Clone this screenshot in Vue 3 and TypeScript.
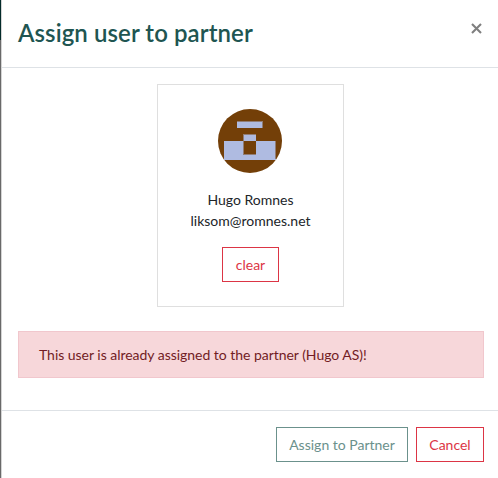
<script setup lang="ts">
import { ref } from 'vue'

interface User {
  name: string
  email: string
}

const user = ref<User>({ name: 'Hugo Romnes', email: 'liksom@romnes.net' })
const partner = ref<string>('Hugo AS')
</script>

<template>
  <div class="page">
    <div class="backdrop"><div class="backdrop-nav"></div></div>
    <section class="modal" role="dialog">
      <header class="modal-header">
        <h1 class="title">Assign user to partner</h1>
        <button class="close" type="button" aria-label="Close">
          <svg width="11" height="11" viewBox="0 0 11 11">
            <path d="M1 1 L10 10 M10 1 L1 10" fill="none" stroke="#7f7f7f" stroke-width="2.1" />
          </svg>
        </button>
      </header>
      <div class="modal-body">
        <div class="card">
          <svg class="avatar" width="64" height="64" viewBox="0 0 64 64">
            <circle cx="32" cy="32" r="32" fill="#733f08" />
            <g shape-rendering="crispEdges">
              <path d="M19 12H45V19H19Z M25 25H38V32H58V51H6V32H25Z" fill="#afbbe1" />
              <path d="M25 32H38V45H25Z" fill="#733f08" />
              <path
                d="M19 12.5H45 M44.5 12V19 M25 25.5H38 M25.5 25V45 M57.5 32V50 M25 45.5H38"
                fill="none"
                stroke="#917d75"
              />
            </g>
          </svg>
          <div class="name">{{ user.name }}</div>
          <div class="email">{{ user.email }}</div>
          <button class="btn danger clear" type="button">clear</button>
        </div>
        <div class="alert">This user is already assigned to the partner ({{ partner }})!</div>
      </div>
      <footer class="modal-footer">
        <button class="btn primary" type="button">Assign to Partner</button>
        <button class="btn danger cancel" type="button">Cancel</button>
      </footer>
    </section>
  </div>
</template>

<style>
body {
  margin: 0;
  background: #fff;
}
</style>

<style scoped>
.page {
  display: flex;
  width: 498px;
  height: 478px;
  overflow: hidden;
  box-sizing: border-box;
  font-family: Lato, 'Liberation Sans', sans-serif;
  font-size: 14px;
  line-height: 21px;
  color: #212529;
}
.page * {
  box-sizing: border-box;
}
.backdrop {
  width: 1px;
  background: #696969;
}
.backdrop-nav {
  height: 40px;
  background: #032b2a;
}
.modal {
  flex: 1;
  border-left: 1px solid #d4d4d4;
  background: #fff;
}
.modal-header {
  display: flex;
  justify-content: space-between;
  height: 68px;
  padding: 16px 16px 0;
  border-bottom: 1px solid #dee2e6;
}
.title {
  margin: 0;
  font-size: 24px;
  font-weight: 600;
  line-height: 33px;
  letter-spacing: 0.08px;
  color: #205551;
}
.close {
  display: block;
  height: 11px;
  margin: 7px 0 0;
  padding: 0;
  border: 0;
  background: none;
}
.close svg {
  display: block;
}
.modal-body {
  height: 342px;
  padding: 16px 14px 0 16px;
}
.card {
  display: flex;
  flex-direction: column;
  align-items: center;
  width: 187px;
  height: 223px;
  margin: 0 0 24px 139px;
  padding-top: 24px;
  border: 1px solid #dfdfdf;
}
.avatar {
  display: block;
  margin: 0 1px 16px 0;
}
.btn {
  height: 35px;
  padding: 0;
  border: 1px solid;
  background: #fff;
  font: inherit;
}
.clear {
  width: 57px;
  margin-top: 16px;
}
.danger {
  color: #dc3545;
}
.primary {
  width: 132px;
  color: #6b918c;
}
.cancel {
  width: 68px;
}
.alert {
  height: 47px;
  padding: 12px 20px;
  border: 1px solid #f1c7cd;
  background: #f7d7da;
  color: #721c24;
  letter-spacing: -0.03px;
}
.modal-footer {
  display: flex;
  justify-content: flex-end;
  gap: 8px;
  height: 68px;
  padding: 16px 14px 0;
  border-top: 1px solid #dee2e6;
}
</style>
